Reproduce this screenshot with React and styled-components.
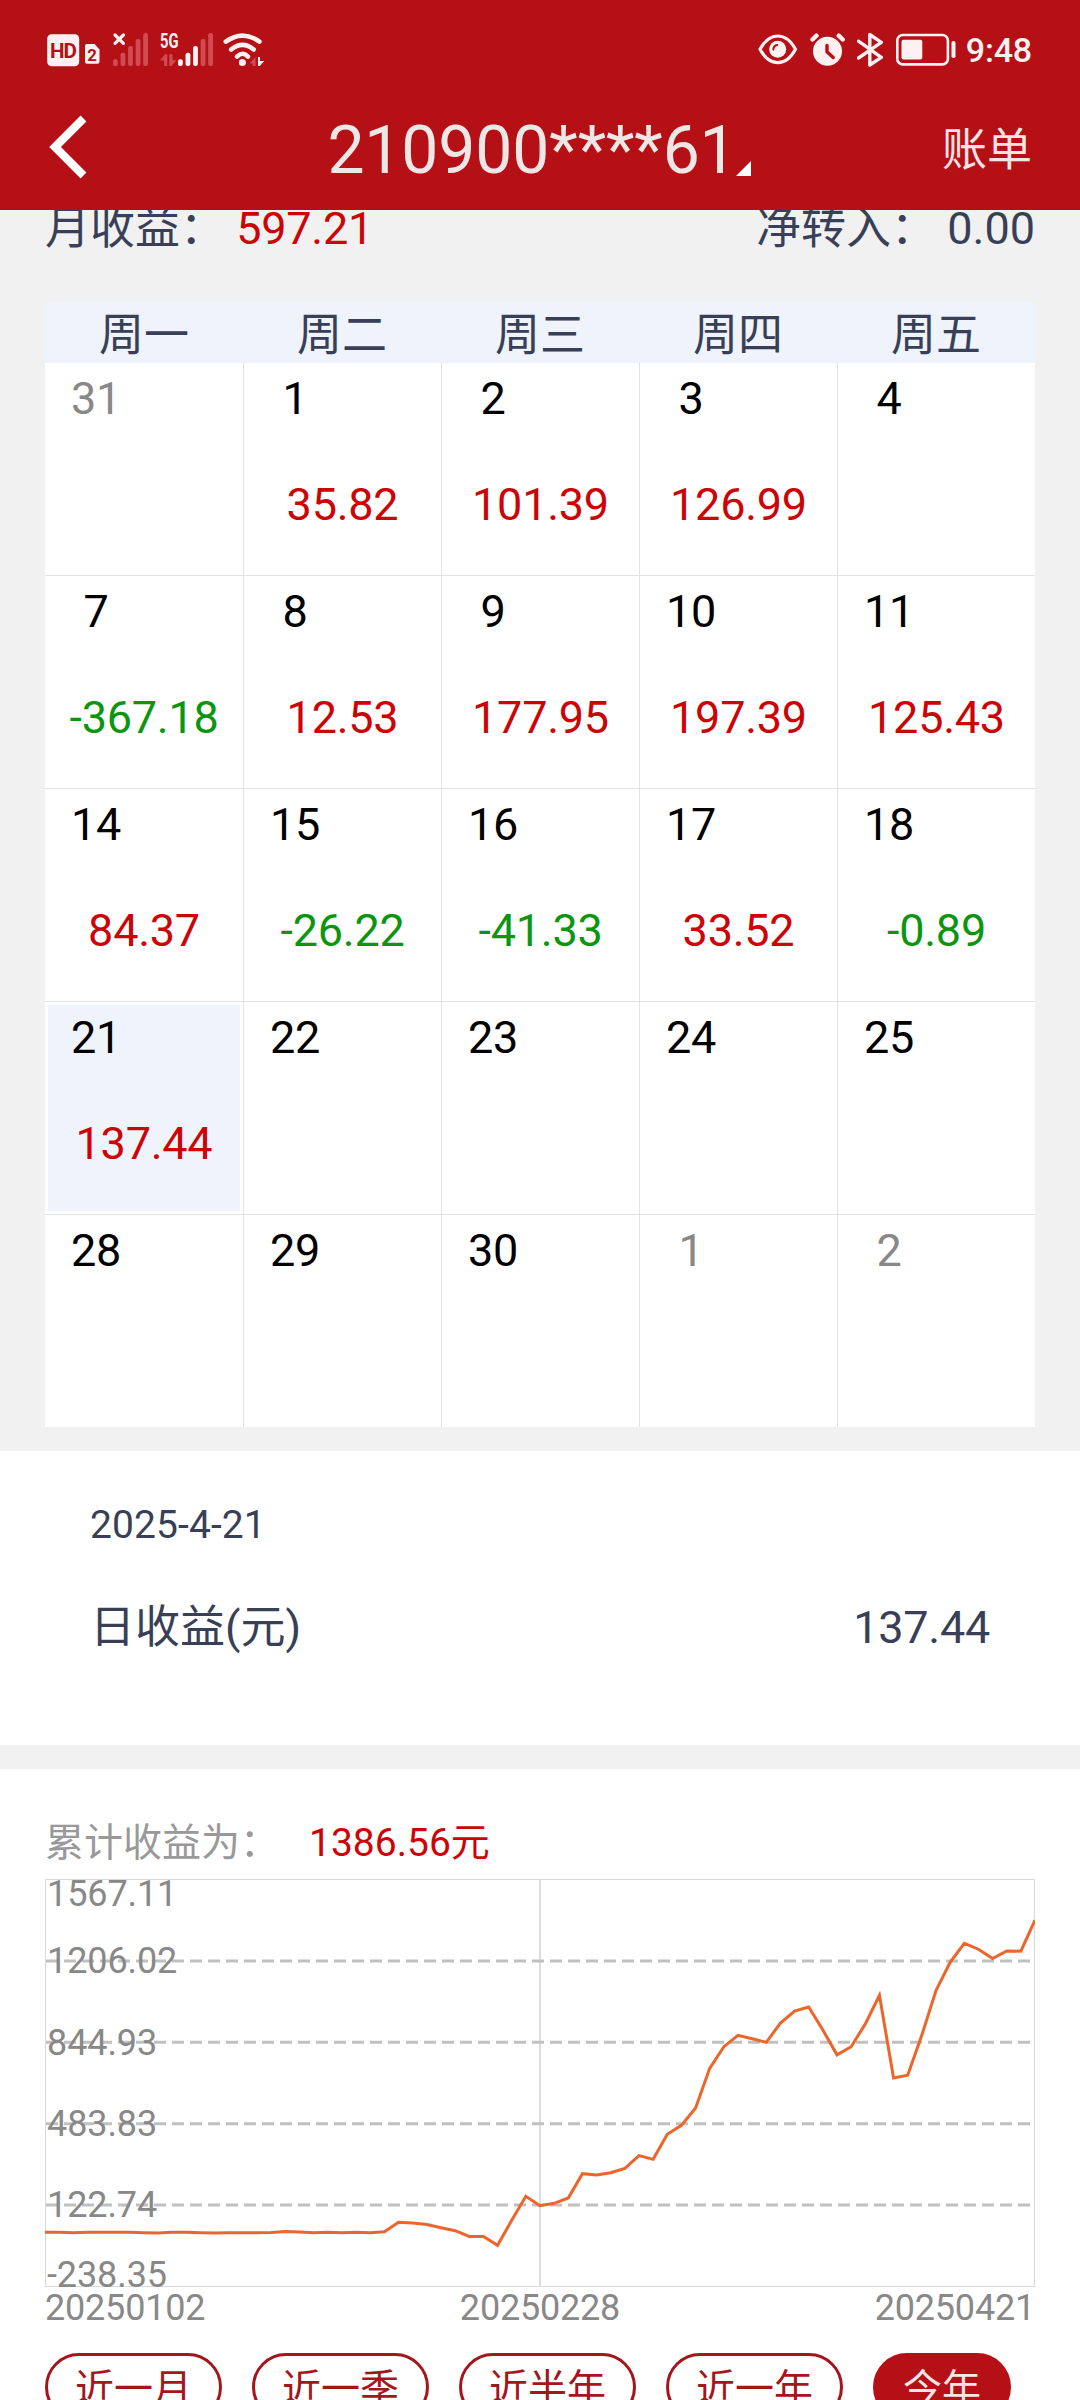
import React from "react";
import styled, { createGlobalStyle, ThemeProvider } from "styled-components";

const theme = {
  colors: {
    primary: "#b51016",
    outline: "#a3161c",
    up: "#cc0406",
    down: "#0c960f",
    text: "#383f57",
    muted: "#888888",
    page: "#f1f1f1",
    light: "#eff3fb",
    line: "#e3e3e3",
    white: "#ffffff",
    icon: "#fdf1f1",
    faint: "#d04c52",
  },
};

const GlobalStyle = createGlobalStyle`
  * {
    box-sizing: border-box;
  }

  body {
    margin: 0;
    font-family: Roboto, "Noto Sans CJK SC", sans-serif;
    font-size: 45px;
  }
`;

const Screen = styled.div`
  width: 1080px;
  height: 2400px;
  overflow: hidden;
  display: flex;
  flex-direction: column;
  background-color: ${({ theme }) => theme.colors.page};
  color: ${({ theme }) => theme.colors.text};
`;

//Header
const Header = styled.header`
  position: relative;
  z-index: 1;
  flex: none;
  height: 210px;
  background-color: ${({ theme }) => theme.colors.primary};
`;

const StatusBar = styled.div`
  height: 86px;
  padding: 32px 48px 0 46px;
  display: flex;
  justify-content: space-between;
`;

const StatusGroup = styled.div`
  display: flex;
  gap: ${({ $gap }) => $gap}px;
`;

const StatusIcon = styled.svg`
  display: block;
  height: 36px;
  flex: none;
  fill: ${({ theme }) => theme.colors.icon};

  text {
    font-weight: 700;
  }

  .faint {
    fill: ${({ theme }) => theme.colors.faint};
  }

  .cut {
    fill: ${({ theme }) => theme.colors.primary};
  }

  .stroke {
    fill: none;
    stroke: ${({ theme }) => theme.colors.icon};
    stroke-linecap: round;
    stroke-linejoin: round;
  }

  .cut-stroke {
    fill: none;
    stroke: ${({ theme }) => theme.colors.primary};
    stroke-linecap: round;
    stroke-linejoin: round;
  }
`;

const Clock = styled.span`
  margin-left: -2px;
  color: ${({ theme }) => theme.colors.icon};
  font-size: 34px;
  font-weight: 500;
  letter-spacing: -0.2px;
  line-height: 36px;
`;

const NavBar = styled.div`
  height: 124px;
  padding: 0 48px 0 46px;
  display: grid;
  grid-template-columns: 1fr auto 1fr;
  align-items: center;
`;

const BackIcon = styled.svg`
  display: block;
  margin-bottom: 2px;
  fill: none;
  stroke: ${({ theme }) => theme.colors.white};
  stroke-width: 8.2px;
`;

const Account = styled.h1`
  margin: 0;
  height: 124px;
  display: flex;
  color: #efe6e6;
  font-size: 66px;
  font-weight: 400;
  letter-spacing: -0.1px;
  line-height: 129px;
`;

const Corner = styled.svg`
  align-self: flex-end;
  margin: 0 0 34px -1px;
  fill: ${({ theme }) => theme.colors.white};
`;

const BillLink = styled.a`
  justify-self: end;
  padding-top: 5px;
  color: #f6e3e3;
  line-height: 60px;
`;

//Calendar
const Summary = styled.div`
  flex: none;
  padding: 0 45px;
  display: flex;
  justify-content: space-between;
  line-height: 37px;
  white-space: pre;
`;

const Profit = styled.span`
  color: ${({ theme, $value }) =>
    $value < 0 ? theme.colors.down : theme.colors.up};
  letter-spacing: -0.25px;
`;

const Calendar = styled.section`
  flex: none;
  margin: 55px 45px 24px;
  background-color: ${({ theme }) => theme.colors.white};
`;

const WeekRow = styled.div`
  height: 61px;
  display: grid;
  grid-template-columns: repeat(5, 1fr);
  background-color: ${({ theme }) => theme.colors.light};
  line-height: 68px;
  text-align: center;
`;

const Week = styled.div`
  display: grid;
  grid-template-columns: repeat(5, 1fr);

  & + & {
    border-top: 1px solid ${({ theme }) => theme.colors.line};
  }
`;

const Day = styled.div`
  height: 212px;
  display: flex;
  flex-direction: column;
  background-color: ${({ theme, $selected }) =>
    $selected ? theme.colors.light : theme.colors.white};
  box-shadow: inset 0 0 0 3px ${({ theme }) => theme.colors.white};

  & + & {
    border-left: 1px solid ${({ theme }) => theme.colors.line};
  }
`;

const DayNumber = styled.div`
  width: 102px;
  color: ${({ theme, $outside }) => ($outside ? theme.colors.muted : "#000")};
  letter-spacing: -0.25px;
  line-height: 71px;
  text-align: center;
`;

const DayProfit = styled(Profit)`
  line-height: 141px;
  text-align: center;
`;

//Selected day
const Detail = styled.section`
  flex: none;
  height: 294px;
  padding: 44px 90px 0;
  background-color: ${({ theme }) => theme.colors.white};
  line-height: 60px;
`;

const DetailDate = styled.div`
  font-size: 39px;
  letter-spacing: 0.1px;
`;

const DetailRow = styled.div`
  margin-top: 43px;
  display: flex;
  justify-content: space-between;
`;

const DetailValue = styled.span`
  letter-spacing: -0.25px;
`;

//Chart
const ChartPanel = styled.section`
  flex: 1;
  margin-top: 24px;
  padding: 37px 45px 0;
  background-color: ${({ theme }) => theme.colors.white};
`;

const ChartTitle = styled.div`
  height: 73px;
  display: flex;
  gap: 30px;
  color: #999;
  font-size: 39px;
  line-height: 75px;

  ${Profit} {
    letter-spacing: 0;
  }
`;

const ChartSvg = styled.svg`
  display: block;

  text {
    fill: ${({ theme }) => theme.colors.muted};
    font-size: 36px;
    letter-spacing: -0.1px;
  }
`;

const ChartDates = styled.div`
  display: flex;
  justify-content: space-between;
  color: ${({ theme }) => theme.colors.muted};
  font-size: 36px;
  letter-spacing: -0.2px;
  line-height: 41px;
`;

const Ranges = styled.div`
  margin-top: 24px;
  display: flex;
  gap: 30px;
`;

const RangeButton = styled.button`
  height: 68px;
  padding: 3px 27px 0;
  border: 3px solid
    ${({ theme, $active }) =>
      $active ? theme.colors.primary : theme.colors.outline};
  border-radius: 34px;
  background-color: ${({ theme, $active }) =>
    $active ? theme.colors.primary : theme.colors.white};
  color: ${({ theme, $active }) => ($active ? "#fbe6e6" : theme.colors.outline)};
  font-family: inherit;
  font-size: 39px;
  line-height: 60px;
  white-space: nowrap;
`;

const weekdays = ["周一", "周二", "周三", "周四", "周五"];

const weeks = [
  [
    { day: 31, outside: true },
    { day: 1, profit: 35.82 },
    { day: 2, profit: 101.39 },
    { day: 3, profit: 126.99 },
    { day: 4 },
  ],
  [
    { day: 7, profit: -367.18 },
    { day: 8, profit: 12.53 },
    { day: 9, profit: 177.95 },
    { day: 10, profit: 197.39 },
    { day: 11, profit: 125.43 },
  ],
  [
    { day: 14, profit: 84.37 },
    { day: 15, profit: -26.22 },
    { day: 16, profit: -41.33 },
    { day: 17, profit: 33.52 },
    { day: 18, profit: -0.89 },
  ],
  [
    { day: 21, profit: 137.44, selected: true },
    { day: 22 },
    { day: 23 },
    { day: 24 },
    { day: 25 },
  ],
  [
    { day: 28 },
    { day: 29 },
    { day: 30 },
    { day: 1, outside: true },
    { day: 2, outside: true },
  ],
];

//Cumulative profit, one value per trading day
const history = [
  2, 2, 0.5, 2, 2, 2, 2, 0.5, -1, 2, 2, 0.5, -1, 0, 0.5, 0.5, 1, 5.6, 3.4, 0.5,
  2, 0.5, 2, 0.5, 4.2, 46.3, 43.3, 36.7, 21.9, 9.3, -16.5, -16.5, -55.7, 55.2,
  161.7, 120.2, 130.6, 154.3, 262.2, 256.3, 266.6, 285.9, 342.1, 325.8, 436.7,
  476.6, 553.5, 729.4, 825.5, 875.8, 861, 844.8, 930.5, 983.8, 1001.5, 899.5,
  789.35, 825.17, 926.56, 1053.55, 686.37, 698.9, 876.85, 1074.24, 1199.67,
  1284.04, 1257.82, 1216.49, 1250.01, 1249.12, 1386.56,
];

const MAX = 1567.11;
const MIN = -238.35;
const CHART_W = 990;
const PLOT_H = 407;

const ticks = [
  { label: "1567.11", baseline: 27 },
  { label: "1206.02", baseline: 94, grid: true },
  { label: "844.93", baseline: 176, grid: true },
  { label: "483.83", baseline: 257, grid: true },
  { label: "122.74", baseline: 338, grid: true },
  { label: "-238.35", baseline: 408 },
];

const ranges = ["近一月", "近一季", "近半年", "近一年", "今年"];

const toY = (value) => 0.5 + ((MAX - value) / (MAX - MIN)) * PLOT_H;

//Status bar icons share one vertical scale, 32 to 68
function SignalBars({ x, level }) {
  return [59.3, 52.7, 46, 39, 33].map((top, i) => (
    <rect
      key={top}
      className={i < level ? undefined : "faint"}
      x={x + i * 7.55}
      y={top}
      width="4.8"
      height={66 - top}
      rx="2"
    />
  ));
}

function StatusLeft() {
  return (
    <StatusGroup $gap={5}>
      <StatusIcon width="34" viewBox="46 32 34 36">
        <rect x="47.2" y="34.3" width="32" height="32" rx="4.5" />
        <text className="cut" x="50" y="58" fontSize="20.6" textLength="27">
          HD
        </text>
      </StatusIcon>
      <StatusIcon width="22" viewBox="85 32 22 36">
        <path d="M87 44h7.6l4.9 5.4v12.3a2 2 0 0 1-2 2H87a2 2 0 0 1-2-2V46a2 2 0 0 1 2-2z" />
        <text className="cut" x="87.3" y="60.6" fontSize="16.8">
          2
        </text>
      </StatusIcon>
      <StatusIcon width="37" viewBox="112 32 37 36">
        <path
          className="stroke"
          strokeWidth="3.2"
          d="M115 35l8.4 8.4M123.4 35l-8.4 8.4"
        />
        <SignalBars x={113} level={0} />
      </StatusIcon>
      <StatusIcon width="60" viewBox="154 32 60 36">
        <text
          x="160"
          y="47.8"
          fontSize="20.6"
          textLength="18.5"
          lengthAdjust="spacingAndGlyphs"
        >
          5G
        </text>
        <path className="faint" d="M160 60.5l5-6.2h2.3V66h-3.2v-5.5z" />
        <path className="faint" d="M169.3 54.3h3.2v6h3.8l-4.8 5.7h-2.2z" />
        <SignalBars x={178} level={3} />
      </StatusIcon>
      <StatusIcon width="46" viewBox="219 32 46 36">
        <g className="stroke" strokeWidth="4.6">
          <path d="M225.8 41.6Q242.4 29.5 259.4 41.6" />
          <path d="M231.2 49.6Q242.4 40 253.7 49.6" />
          <path d="M237 56.6Q242.4 51 248 56.6" />
        </g>
        <circle cx="242.4" cy="62.6" r="3.5" />
        <path className="faint" d="M249.6 63.5l5.9-6.5v9h-2.8v-2.5z" />
        <path d="M258 57h2v4h4.2l-4.4 5H258z" />
      </StatusIcon>
    </StatusGroup>
  );
}

function StatusRight() {
  return (
    <StatusGroup $gap={12}>
      <StatusIcon width="40" viewBox="758 32 40 36">
        <path
          className="stroke"
          strokeWidth="3.2"
          d="M760 49.3C764.5 41 770.5 36 777.7 36S791 41 795.5 49.3C791 57.7 785 62.7 777.7 62.7S764.5 57.7 760 49.3z"
        />
        <circle cx="777.7" cy="49.3" r="8.5" />
        <path
          className="cut-stroke"
          strokeWidth="2"
          d="M773.3 49.5q.2-4 4-4.6"
        />
      </StatusIcon>
      <StatusIcon width="35" viewBox="810 32 35 36">
        <circle cx="827.5" cy="51.3" r="14.5" />
        <path
          className="stroke"
          strokeWidth="4.4"
          d="M812.5 39.5l4-3.8M842.7 39.5l-4-3.8"
        />
        <path
          className="cut-stroke"
          strokeWidth="3.4"
          d="M827 45.5v6.3l6.2 5.7"
        />
      </StatusIcon>
      <StatusIcon width="27" viewBox="857 32 27 36">
        <path
          className="stroke"
          strokeWidth="3.4"
          d="M858.5 41.2L881.3 57.3 869.8 65V34.5L881.3 42.3 858.5 58"
        />
      </StatusIcon>
      <StatusIcon width="60" viewBox="896 32 60 36">
        <rect
          className="stroke"
          strokeWidth="2.6"
          x="897.3"
          y="35"
          width="50.6"
          height="29.4"
          rx="5.5"
        />
        <rect x="901.5" y="39.7" width="20.8" height="19.8" rx="2" />
        <rect x="951.5" y="41" width="4" height="17" rx="1.8" />
      </StatusIcon>
      <Clock>9:48</Clock>
    </StatusGroup>
  );
}

function ProfitChart() {
  const step = CHART_W / (history.length - 1);
  const points = history
    .map((value, i) => `${(i * step).toFixed(2)},${toY(value).toFixed(2)}`)
    .join(" ");

  return (
    <ChartSvg width="990" height="409" viewBox="0 0 990 409">
      <rect
        x="0.5"
        y="0.5"
        width="989"
        height="407"
        fill="none"
        stroke="#d9d9d9"
      />
      <path d="M495 1V407" stroke="#dddddd" strokeWidth="2" />
      {ticks
        .filter((tick) => tick.grid)
        .map((tick) => (
          <path
            key={tick.label}
            d={`M1 ${toY(Number(tick.label)).toFixed(1)}H989`}
            stroke="#c0c0c0"
            strokeWidth="3"
            strokeDasharray="12 6"
          />
        ))}
      {ticks.map((tick) => (
        <text key={tick.label} x="2" y={tick.baseline}>
          {tick.label}
        </text>
      ))}
      <polyline
        points={points}
        fill="none"
        stroke="#ec652b"
        strokeWidth="3"
      />
    </ChartSvg>
  );
}

export default function App() {
  return (
    <ThemeProvider theme={theme}>
      <GlobalStyle />
      <Screen>
        <Header>
          <StatusBar>
            <StatusLeft />
            <StatusRight />
          </StatusBar>
          <NavBar>
            <BackIcon width="44" height="70" viewBox="46 112 44 70">
              <path d="M83.5 118.5L55 147l28.5 28.5" />
            </BackIcon>
            <Account>
              210900****61
              <Corner width="15" height="15" viewBox="0 0 15 15">
                <path d="M15 0v15H0z" />
              </Corner>
            </Account>
            <BillLink>账单</BillLink>
          </NavBar>
        </Header>

        <Summary>
          <div>
            月收益： <Profit $value={597.21}>597.21</Profit>
          </div>
          <div>净转入： 0.00</div>
        </Summary>

        <Calendar>
          <WeekRow>
            {weekdays.map((name) => (
              <div key={name}>{name}</div>
            ))}
          </WeekRow>
          {weeks.map((week, i) => (
            <Week key={i}>
              {week.map((item) => (
                <Day key={item.day} $selected={item.selected}>
                  <DayNumber $outside={item.outside}>{item.day}</DayNumber>
                  {item.profit !== undefined && (
                    <DayProfit $value={item.profit}>
                      {item.profit.toFixed(2)}
                    </DayProfit>
                  )}
                </Day>
              ))}
            </Week>
          ))}
        </Calendar>

        <Detail>
          <DetailDate>2025-4-21</DetailDate>
          <DetailRow>
            <span>日收益(元)</span>
            <DetailValue>137.44</DetailValue>
          </DetailRow>
        </Detail>

        <ChartPanel>
          <ChartTitle>
            <span>累计收益为：</span>
            <Profit $value={1386.56}>1386.56元</Profit>
          </ChartTitle>
          <ProfitChart />
          <ChartDates>
            <span>20250102</span>
            <span>20250228</span>
            <span>20250421</span>
          </ChartDates>
          <Ranges>
            {ranges.map((name) => (
              <RangeButton key={name} $active={name === "今年"}>
                {name}
              </RangeButton>
            ))}
          </Ranges>
        </ChartPanel>
      </Screen>
    </ThemeProvider>
  );
}
